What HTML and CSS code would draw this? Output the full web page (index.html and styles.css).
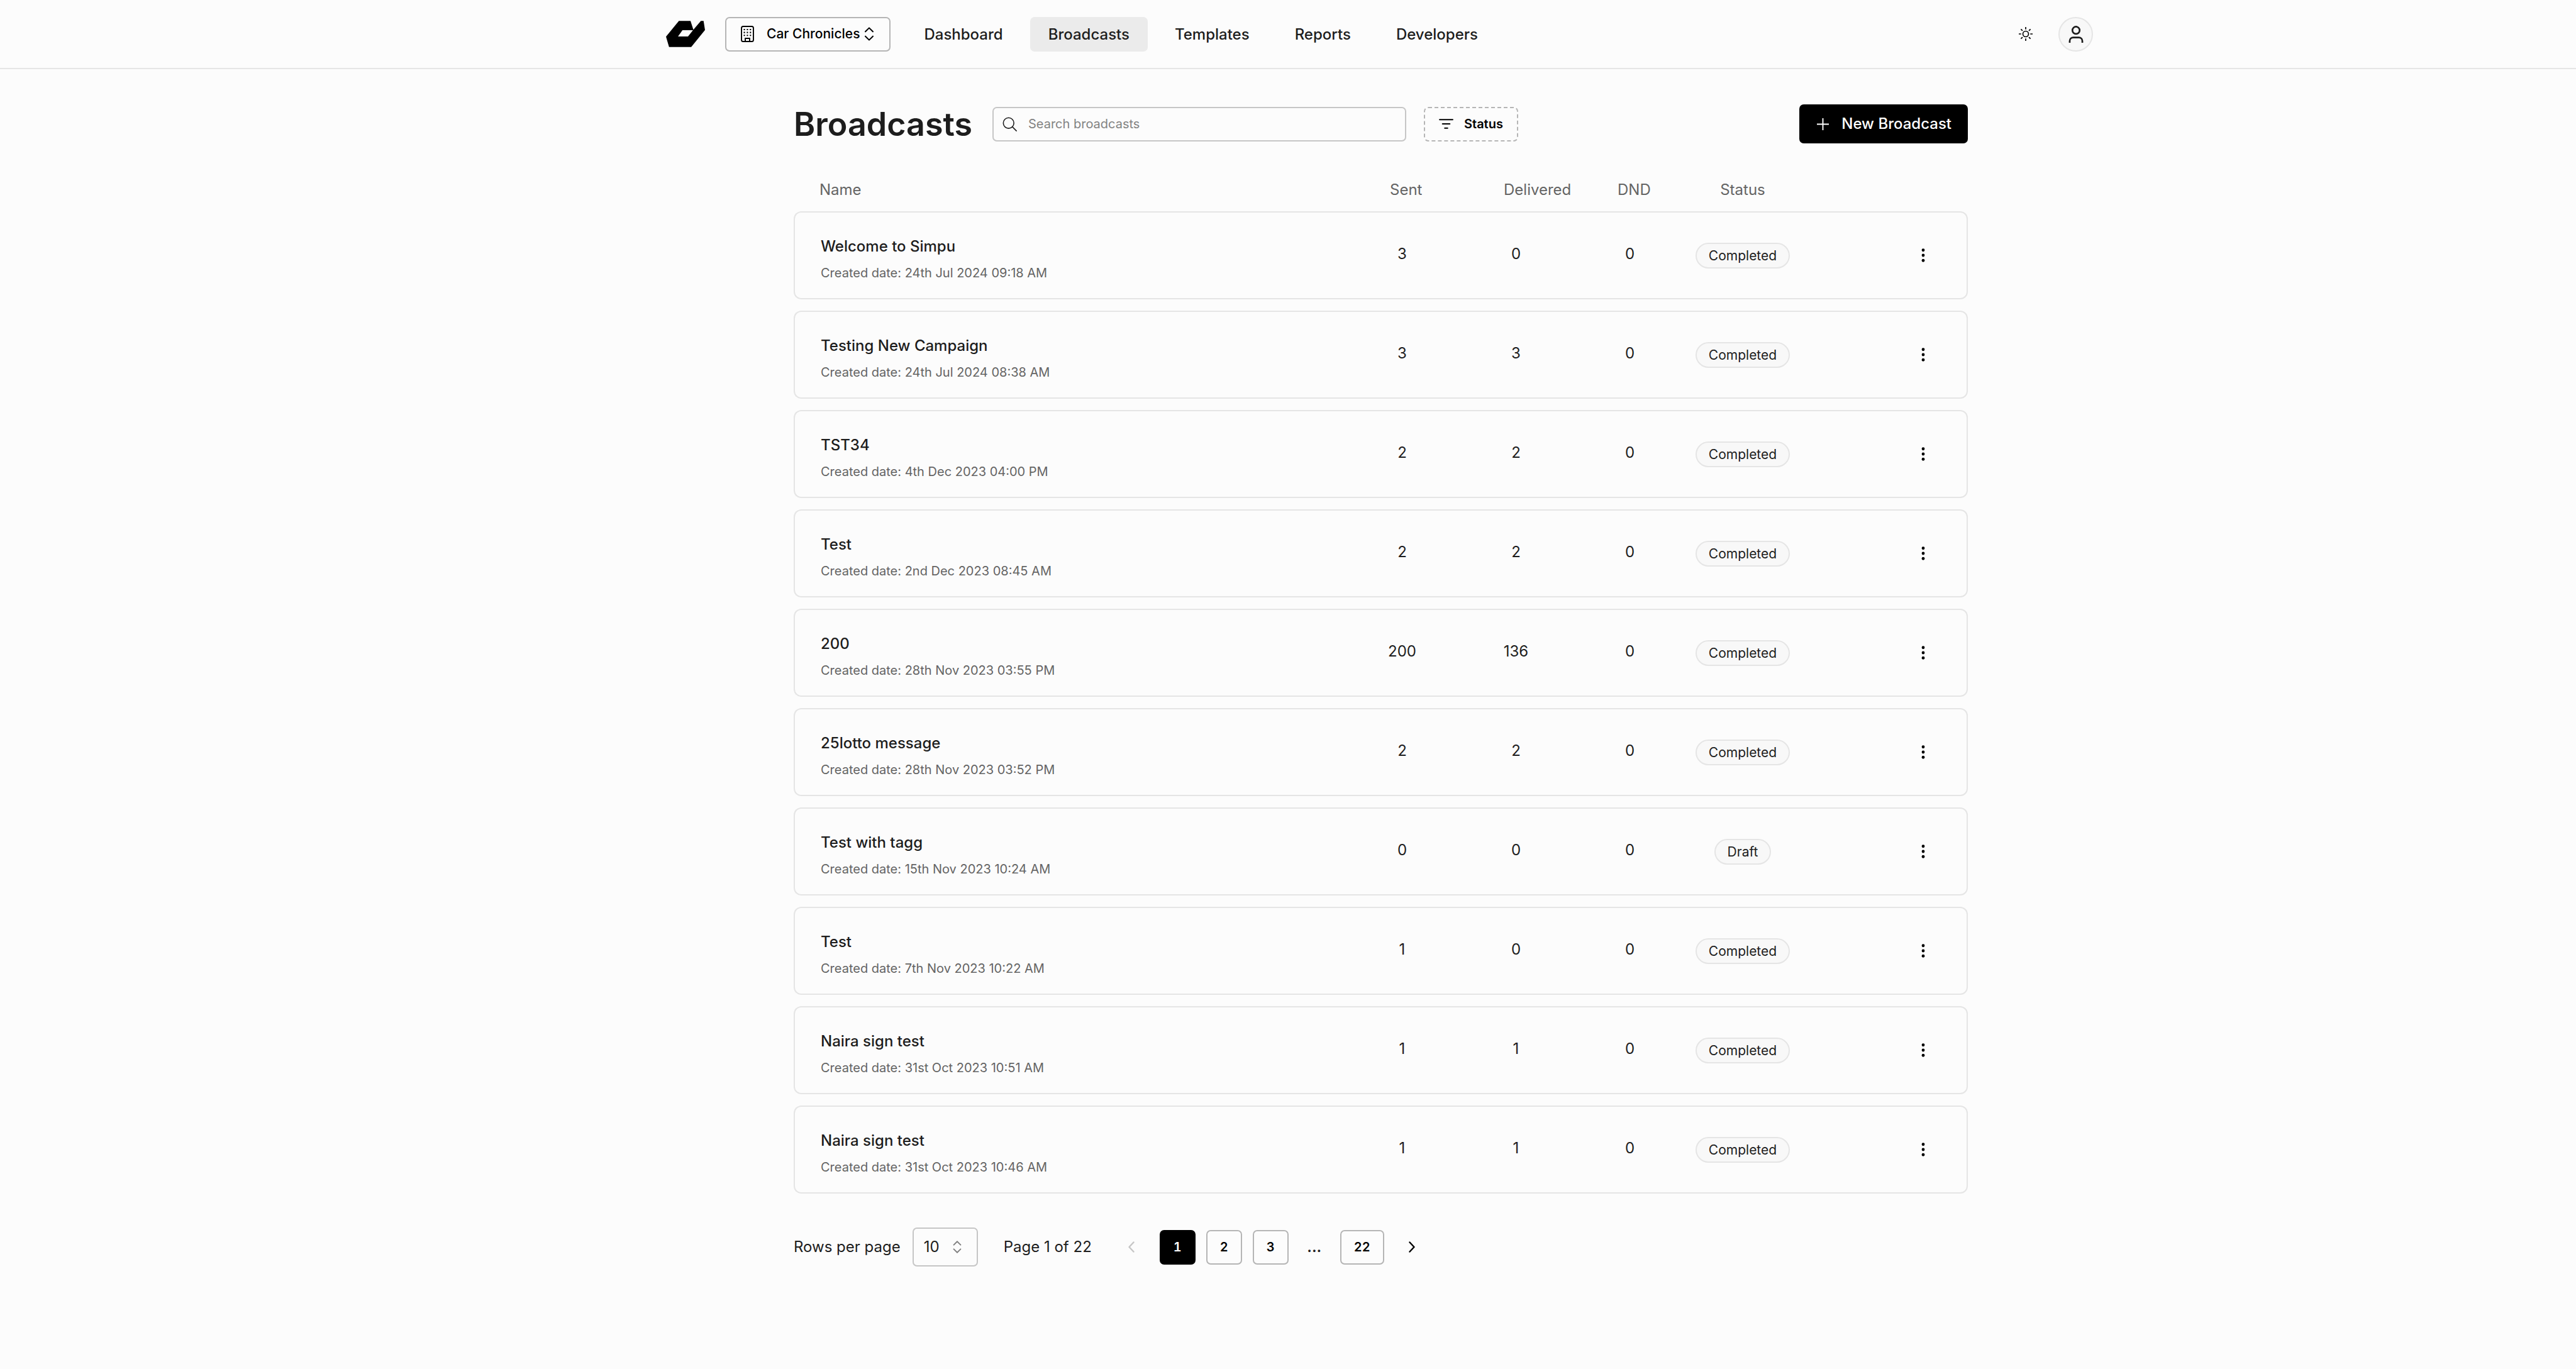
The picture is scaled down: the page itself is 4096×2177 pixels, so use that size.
FILE: index.html
```html
<!DOCTYPE html>
<html lang="en">
<head>
    <meta charset="UTF-8">
    <meta name="viewport" content="width=device-width, initial-scale=1.0">
    <title>Broadcasts</title>
    <link rel="stylesheet" href="styles.css">
</head>
<body>

    <!-- Shared icons -->
    <svg class="sprite" aria-hidden="true">
        <symbol id="dots" viewBox="0 0 6 24">
            <circle cx="3" cy="3" r="2.6"/><circle cx="3" cy="12" r="2.6"/><circle cx="3" cy="21" r="2.6"/>
        </symbol>
        <symbol id="up-down" viewBox="0 0 16 24">
            <path d="M1.5 8 8 1.5 14.5 8M1.5 16 8 22.5 14.5 16" fill="none" stroke="currentColor" stroke-width="2.2" stroke-linecap="round" stroke-linejoin="round"/>
        </symbol>
    </svg>

    <!-- Top bar -->
    <header class="topbar">
        <div class="topbar-inner">
            <a class="logo" href="#" aria-label="Home">
                <svg viewBox="48 52 218 146"><path fill-rule="evenodd" d="M120 52h65l16 49 42-49h15l8 51-77 95H65L48 140zM140 104l-25 35h56l28-35z"/></svg>
            </a>
            <button class="org-button" type="button">
                <svg class="building" viewBox="0 0 24 30" fill="none" stroke="currentColor" stroke-width="2.2">
                    <rect x="1.1" y="1.1" width="21.8" height="27.8" rx="3"/>
                    <path d="M8 29v-6h8v6"/>
                    <path d="M5.1 7h13.6M5.1 12.3h13.6M5.1 17.6h13.6" stroke-width="2.4" stroke-dasharray="2.4 3.2"/>
                </svg>
                <span>Car Chronicles</span>
                <svg class="up-down"><use href="#up-down"/></svg>
            </button>
            <nav class="nav">
                <a href="#">Dashboard</a>
                <a href="#" class="active">Broadcasts</a>
                <a href="#">Templates</a>
                <a href="#">Reports</a>
                <a href="#">Developers</a>
            </nav>
            <div class="topbar-right">
                <button class="theme-button" type="button" aria-label="Toggle theme">
                    <svg viewBox="0 0 26 26" fill="none" stroke="currentColor" stroke-width="2">
                        <circle cx="13" cy="13" r="5.3"/>
                        <path d="M13 0v4.500M13 21.500V26M0 13h4.500M21.500 13H26M4 4l3 3M19 19l3 3M4 22l3-3M19 7l3-3"/>
                    </svg>
                </button>
                <button class="avatar" type="button" aria-label="Account">
                    <svg viewBox="0 0 28 32" fill="none" stroke="currentColor" stroke-width="3.2">
                        <circle cx="14" cy="8.500" r="6.8"/>
                        <path d="M2.100 32v-3.500a6.500 6.500 0 0 1 6.500-6.500h10.800a6.500 6.500 0 0 1 6.500 6.500V32"/>
                    </svg>
                </button>
            </div>
        </div>
    </header>

    <main class="main">
        <!-- Title, search and filter -->
        <div class="toolbar">
            <h1>Broadcasts</h1>
            <label class="search">
                <svg viewBox="0 0 26 26" fill="none" stroke="currentColor" stroke-width="1.8" stroke-linecap="round"><circle cx="11" cy="11" r="9.500"/><path d="m18 18 7 7"/></svg>
                <input type="search" placeholder="Search broadcasts" aria-label="Search broadcasts">
            </label>
            <button class="filter-button" type="button">
                <svg viewBox="0 0 26 18" stroke="currentColor" stroke-width="2.4" stroke-linecap="round"><path d="M1.300 1.300h23.400M6.500 9h13M10.500 16.700h5"/></svg>
                <span>Status</span>
            </button>
            <button class="new-button" type="button">
                <svg viewBox="0 0 22 22" stroke="currentColor" stroke-width="2.2"><path d="M11 0v22M0 11h22"/></svg>
                <span>New Broadcast</span>
            </button>
        </div>

        <!-- Broadcast list -->
        <table class="broadcasts">
            <thead>
                <tr>
                    <th class="col-name">Name</th>
                    <th class="col-number">Sent</th>
                    <th class="col-number">Delivered</th>
                    <th class="col-number">DND</th>
                    <th class="col-status">Status</th>
                    <th class="col-actions" aria-label="Actions"></th>
                </tr>
            </thead>
            <tbody>
                <tr>
                    <td class="name"><strong>Welcome to Simpu</strong><small>Created date: 24th Jul 2024 09:18 AM</small></td>
                    <td class="number">3</td><td class="number">0</td><td class="number">0</td>
                    <td class="status"><span class="badge">Completed</span></td>
                    <td class="actions"><button type="button" aria-label="More"><svg><use href="#dots"/></svg></button></td>
                </tr>
                <tr>
                    <td class="name"><strong>Testing New Campaign</strong><small>Created date: 24th Jul 2024 08:38 AM</small></td>
                    <td class="number">3</td><td class="number">3</td><td class="number">0</td>
                    <td class="status"><span class="badge">Completed</span></td>
                    <td class="actions"><button type="button" aria-label="More"><svg><use href="#dots"/></svg></button></td>
                </tr>
                <tr>
                    <td class="name"><strong>TST34</strong><small>Created date: 4th Dec 2023 04:00 PM</small></td>
                    <td class="number">2</td><td class="number">2</td><td class="number">0</td>
                    <td class="status"><span class="badge">Completed</span></td>
                    <td class="actions"><button type="button" aria-label="More"><svg><use href="#dots"/></svg></button></td>
                </tr>
                <tr>
                    <td class="name"><strong>Test</strong><small>Created date: 2nd Dec 2023 08:45 AM</small></td>
                    <td class="number">2</td><td class="number">2</td><td class="number">0</td>
                    <td class="status"><span class="badge">Completed</span></td>
                    <td class="actions"><button type="button" aria-label="More"><svg><use href="#dots"/></svg></button></td>
                </tr>
                <tr>
                    <td class="name"><strong>200</strong><small>Created date: 28th Nov 2023 03:55 PM</small></td>
                    <td class="number">200</td><td class="number">136</td><td class="number">0</td>
                    <td class="status"><span class="badge">Completed</span></td>
                    <td class="actions"><button type="button" aria-label="More"><svg><use href="#dots"/></svg></button></td>
                </tr>
                <tr>
                    <td class="name"><strong>25lotto message</strong><small>Created date: 28th Nov 2023 03:52 PM</small></td>
                    <td class="number">2</td><td class="number">2</td><td class="number">0</td>
                    <td class="status"><span class="badge">Completed</span></td>
                    <td class="actions"><button type="button" aria-label="More"><svg><use href="#dots"/></svg></button></td>
                </tr>
                <tr>
                    <td class="name"><strong>Test with tagg</strong><small>Created date: 15th Nov 2023 10:24 AM</small></td>
                    <td class="number">0</td><td class="number">0</td><td class="number">0</td>
                    <td class="status"><span class="badge">Draft</span></td>
                    <td class="actions"><button type="button" aria-label="More"><svg><use href="#dots"/></svg></button></td>
                </tr>
                <tr>
                    <td class="name"><strong>Test</strong><small>Created date: 7th Nov 2023 10:22 AM</small></td>
                    <td class="number">1</td><td class="number">0</td><td class="number">0</td>
                    <td class="status"><span class="badge">Completed</span></td>
                    <td class="actions"><button type="button" aria-label="More"><svg><use href="#dots"/></svg></button></td>
                </tr>
                <tr>
                    <td class="name"><strong>Naira sign test</strong><small>Created date: 31st Oct 2023 10:51 AM</small></td>
                    <td class="number">1</td><td class="number">1</td><td class="number">0</td>
                    <td class="status"><span class="badge">Completed</span></td>
                    <td class="actions"><button type="button" aria-label="More"><svg><use href="#dots"/></svg></button></td>
                </tr>
                <tr>
                    <td class="name"><strong>Naira sign test</strong><small>Created date: 31st Oct 2023 10:46 AM</small></td>
                    <td class="number">1</td><td class="number">1</td><td class="number">0</td>
                    <td class="status"><span class="badge">Completed</span></td>
                    <td class="actions"><button type="button" aria-label="More"><svg><use href="#dots"/></svg></button></td>
                </tr>
            </tbody>
        </table>

        <!-- Pagination -->
        <div class="pagination">
            <label for="rows">Rows per page</label>
            <div class="rows-select">
                <select id="rows">
                    <option>10</option>
                    <option>20</option>
                    <option>50</option>
                </select>
                <svg class="up-down"><use href="#up-down"/></svg>
            </div>
            <span class="page-info">Page 1 of 22</span>
            <div class="pages">
                <button class="arrow" type="button" aria-label="Previous page" disabled>
                    <svg viewBox="0 0 10 18"><path d="M8.500 1.500 1.500 9l7 7.500"/></svg>
                </button>
                <button class="page current" type="button">1</button>
                <button class="page" type="button">2</button>
                <button class="page" type="button">3</button>
                <span class="ellipsis">...</span>
                <button class="page" type="button">22</button>
                <button class="arrow" type="button" aria-label="Next page">
                    <svg viewBox="0 0 10 18"><path d="m1.500 1.500 7 7.500-7 7.500"/></svg>
                </button>
            </div>
        </div>
    </main>

</body>
</html>
```

FILE: styles.css
```css
/* General Styles */
* {
    box-sizing: border-box;
}

body {
    margin: 0;
    background-color: #fcfcfc;
    color: #1d1d1d;
    font-family: Inter, "Open Sans", sans-serif;
    font-size: 24px;
    line-height: 32px;
}

button, input, select {
    font: inherit;
    color: #000;
    background: none;
    border: none;
    margin: 0;
    padding: 0;
}

button {
    display: flex;
    align-items: center;
    justify-content: center;
    cursor: pointer;
}

a {
    color: inherit;
    text-decoration: none;
}

svg {
    display: block;
    flex: none;
}

.sprite {
    display: none;
}

.up-down {
    width: 16px;
    height: 22px;
}

/* Top bar */
.topbar {
    display: grid;
    grid-template-columns: 1059fr 2269fr 768fr;
    height: 110px;
    border-bottom: 2px solid #e5e5e5;
}

.topbar-inner {
    grid-column: 2;
    display: flex;
    align-items: center;
}

.logo svg {
    width: 62px;
    height: 42px;
}

.org-button {
    height: 55px;
    margin-left: 32px;
    padding: 0 24px 0 23px;
    border: 2px solid #b5b5b5;
    border-radius: 7px;
    font-size: 21px;
    font-weight: 500;
}

.building {
    width: 21px;
    height: 26px;
    margin-right: 20px;
}

.org-button .up-down {
    margin-left: 7px;
}

.nav {
    display: flex;
    gap: 14px;
    margin-left: 24px;
}

.nav a {
    height: 55px;
    padding: 0 29px;
    border-radius: 7px;
    font-weight: 500;
    line-height: 55px;
}

.nav .active {
    background-color: #ebebeb;
}

.topbar-right {
    display: flex;
    align-items: center;
    gap: 41px;
    margin-left: auto;
}

.theme-button svg {
    width: 22px;
    height: 22px;
}

.avatar {
    width: 55px;
    height: 55px;
    border: 2px solid #e5e5e5;
    border-radius: 50%;
    background-color: #f8f8f8;
    color: #1d1d1d;
}

.avatar svg {
    width: 24px;
    height: 27px;
}

/* Toolbar */
.main {
    display: grid;
    grid-template-columns: 1262fr 1867fr 967fr;
    padding: 56px 0;
}

.main > * {
    grid-column: 2;
}

.toolbar {
    display: flex;
    align-items: center;
    height: 62px;
}

h1 {
    margin: 0;
    padding-top: 2px;
    font-size: 52px;
    font-weight: 600;
    line-height: 62px;
}

.search {
    display: flex;
    align-items: center;
    gap: 18px;
    width: 658px;
    height: 55px;
    margin-left: 32px;
    padding: 0 14px;
    border: 2px solid #c6c6c6;
    border-radius: 7px;
}

.search svg {
    width: 23px;
    height: 23px;
}

.search input {
    flex: 1;
    font-size: 20px;
    outline: none;
}

.search input::placeholder {
    color: #838383;
    opacity: 1;
}

.filter-button {
    gap: 17px;
    height: 55px;
    margin-left: 28px;
    padding: 0 22px;
    border: 2px dashed #b5b5b5;
    border-radius: 7px;
    font-size: 20px;
    font-weight: 600;
}

.filter-button svg {
    width: 23px;
    height: 16px;
}

.new-button {
    gap: 20px;
    height: 62px;
    margin-left: auto;
    padding: 0 26px 0 28px;
    border-radius: 7px;
    background-color: #000;
    color: #fff;
    font-weight: 500;
}

.new-button svg {
    width: 19px;
    height: 19px;
}

/* Broadcast list */
.broadcasts {
    width: 100%;
    margin-top: 38px;
    border-spacing: 0 18px;
    table-layout: fixed;
}

th {
    padding: 2px 0 0;
    color: #646464;
    font-weight: 400;
    text-align: left;
}

.col-name {
    padding-left: 41px;
}

.col-number {
    width: 181px;
    padding-left: 71px;
}

.col-status {
    width: 178px;
    text-align: center;
}

.col-actions {
    width: 269px;
}

td {
    height: 140px;
    padding: 0;
    border: solid #e5e5e5;
    border-width: 2px 0;
}

td:first-child {
    border-left-width: 2px;
    border-radius: 12px 0 0 12px;
}

td:last-child {
    border-right-width: 2px;
    border-radius: 0 12px 12px 0;
}

.name {
    padding: 14px 0 0 41px;
}

.name strong, .name small {
    display: block;
    line-height: 42px;
}

.name strong {
    font-weight: 500;
}

.name small {
    color: #646464;
    font-size: 20px;
}

.number {
    padding-bottom: 4px;
    text-align: center;
}

.badge {
    display: block;
    width: fit-content;
    height: 41px;
    margin: 0 auto;
    padding: 0 19px;
    border: 2px solid #e5e5e5;
    border-radius: 21px;
    background-color: #f8f8f8;
    font-size: 21px;
    line-height: 37px;
}

.actions button {
    width: 40px;
    height: 40px;
    margin-left: auto;
    margin-right: 49px;
}

.actions svg {
    width: 6px;
    height: 22px;
}

/* Pagination */
.pagination {
    display: flex;
    align-items: center;
    margin-top: 36px;
}

.rows-select {
    display: flex;
    align-items: center;
    width: 104px;
    height: 62px;
    margin-left: 19px;
    border: 2px solid #c6c6c6;
    border-radius: 7px;
    color: #7e7e7e;
}

.rows-select select {
    flex: 1;
    width: 100%;
    height: 100%;
    padding-left: 16px;
    color: #1d1d1d;
    appearance: none;
}

.rows-select .up-down {
    width: 14px;
    height: 20px;
    margin-right: 24px;
}

.page-info {
    margin-left: 41px;
}

.pages {
    display: flex;
    align-items: center;
    gap: 17px;
    margin-left: 36px;
}

.page {
    min-width: 57px;
    height: 55px;
    padding: 0 20px;
    border: 2px solid #b5b5b5;
    border-radius: 7px;
    font-size: 20px;
    font-weight: 600;
    font-variant-numeric: tabular-nums;
}

.page.current {
    border-color: #000;
    background-color: #000;
    color: #fff;
}

.ellipsis {
    width: 48px;
    font-weight: 600;
    text-align: center;
}

.arrow {
    width: 55px;
    height: 55px;
}

.arrow svg {
    width: 10px;
    height: 18px;
    fill: none;
    stroke: currentColor;
    stroke-width: 2.4;
    stroke-linecap: round;
    stroke-linejoin: round;
}

.arrow:disabled {
    color: #c6c6c6;
}
```
